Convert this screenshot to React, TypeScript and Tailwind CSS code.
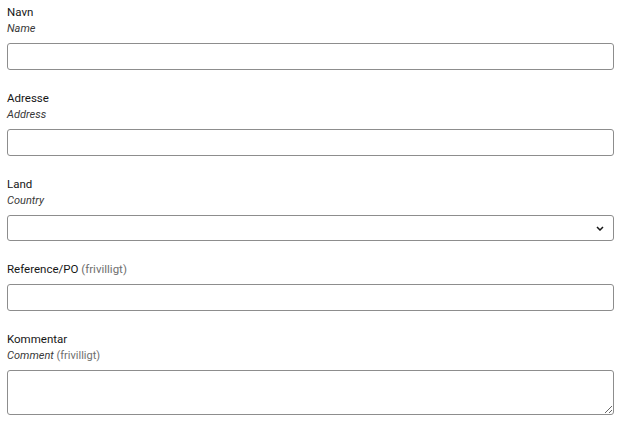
import React from "react";

const font = { fontFamily: 'Roboto, "Liberation Sans", sans-serif' };

function Label({ main, sub, optional }: { main: string; sub?: string; optional?: boolean }) {
  return (
    <div className={"text-[11.5px] leading-4" + (sub ? "" : " pb-px")}>
      <div className="text-[#161616]">
        {main}
        {!sub && optional && <span className="text-[#6f6f6f]"> (frivilligt)</span>}
      </div>
      {sub && (
        <div className="mt-px text-[11px] leading-4 text-[#393939]">
          <span className="italic">{sub}</span>
          {optional && <span className="text-[#6f6f6f]"> (frivilligt)</span>}
        </div>
      )}
    </div>
  );
}

const inputCls =
  "mt-[6px] block w-full h-[27px] rounded-[3px] border border-[#8d8d8d] bg-white px-2 text-[12px] outline-none";

export default function App() {
  return (
    <div className="bg-white pl-[7px] pr-[16px] pt-1 pb-4" style={font}>
      <div className="flex flex-col gap-5">
        <div>
          <Label main="Navn" sub="Name" />
          <input className={inputCls} />
        </div>
        <div>
          <Label main="Adresse" sub="Address" />
          <input className={inputCls} />
        </div>
        <div>
          <Label main="Land" sub="Country" />
          <div className="relative">
            <select className={inputCls.replace("h-[27px]", "h-[26px]") + " appearance-none"} defaultValue="">
              <option value=""></option>
            </select>
            <svg
              className="pointer-events-none absolute right-[10px] top-[11px]"
              width="8"
              height="5"
              viewBox="0 0 8 5"
              fill="none"
            >
              <path d="M1 1l3 3 3-3" stroke="#161616" strokeWidth="1.5" />
            </svg>
          </div>
        </div>
        <div>
          <Label main="Reference/PO" optional />
          <input className={inputCls} />
        </div>
        <div>
          <Label main="Kommentar" sub="Comment" optional />
          <textarea className={inputCls.replace("h-[27px]", "h-[45px]")} />
        </div>
      </div>
    </div>
  );
}
